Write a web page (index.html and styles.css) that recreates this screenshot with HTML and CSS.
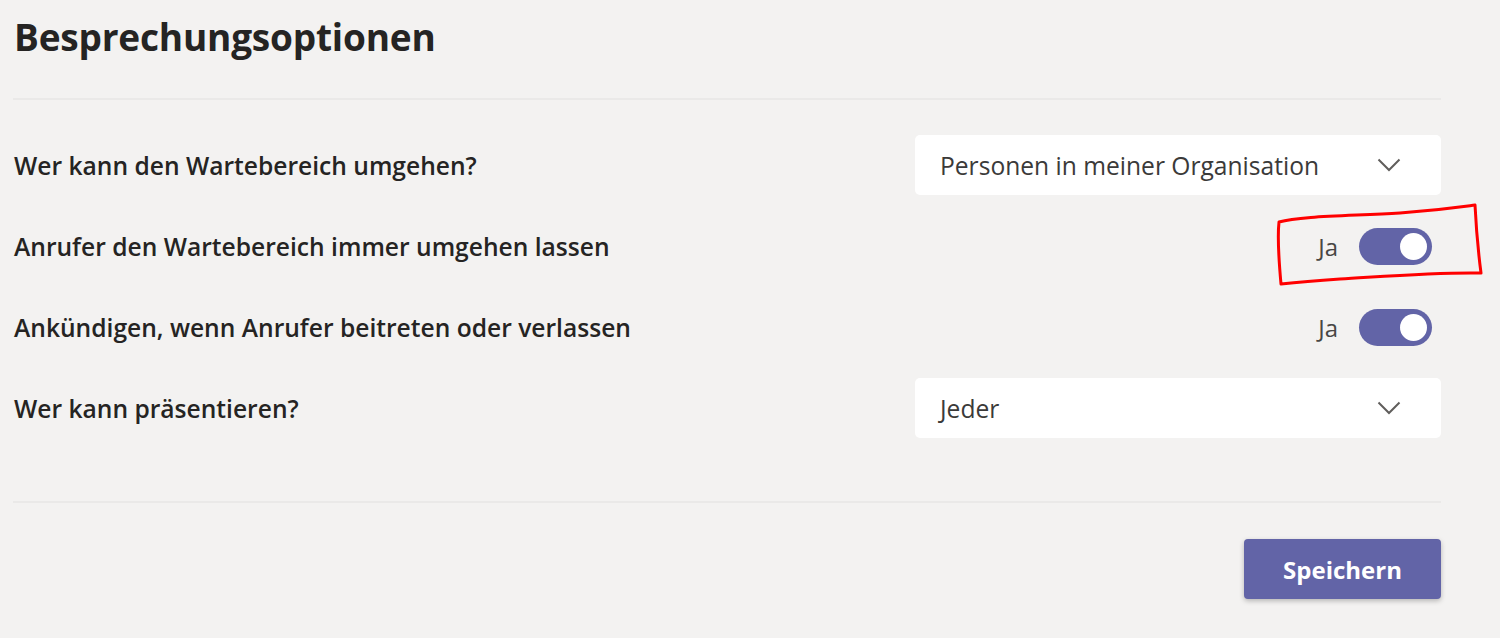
FILE: index.html
```html
<!DOCTYPE html>
<html lang="de">
<head>
<meta charset="utf-8">
<title>Besprechungsoptionen</title>
<link rel="stylesheet" href="styles.css">
</head>
<body>
<main class="page">
  <h1 class="title">Besprechungsoptionen</h1>
  <hr class="divider">
  <section class="options">
    <div class="row">
      <span class="label">Wer kann den Wartebereich umgehen?</span>
      <div class="select">
        <span class="select-text">Personen in meiner Organisation</span>
        <svg class="chevron" width="24" height="14" viewBox="0 0 24 14"><path d="M1.5 1.5 L12 12 L22.5 1.5" fill="none" stroke="#605e5c" stroke-width="2"/></svg>
      </div>
    </div>
    <div class="row">
      <span class="label">Anrufer den Wartebereich immer umgehen lassen</span>
      <div class="switch-wrap">
        <span class="switch-text">Ja</span>
        <span class="switch"><span class="knob"></span></span>
      </div>
    </div>
    <div class="row">
      <span class="label">Ankündigen, wenn Anrufer beitreten oder verlassen</span>
      <div class="switch-wrap">
        <span class="switch-text">Ja</span>
        <span class="switch"><span class="knob"></span></span>
      </div>
    </div>
    <div class="row">
      <span class="label">Wer kann präsentieren?</span>
      <div class="select">
        <span class="select-text">Jeder</span>
        <svg class="chevron" width="24" height="14" viewBox="0 0 24 14"><path d="M1.5 1.5 L12 12 L22.5 1.5" fill="none" stroke="#605e5c" stroke-width="2"/></svg>
      </div>
    </div>
  </section>
  <hr class="divider divider-bottom">
  <div class="actions">
    <button class="save">Speichern</button>
  </div>
</main>
<svg class="annotation" width="1500" height="638" viewBox="0 0 1500 638">
  <path d="M1279 222 C1300 216 1350 216 1400 213 C1440 210 1460 207 1475 205 C1476 225 1478 250 1481 273 C1440 272 1390 276 1340 279 C1310 281 1290 283 1281 284 C1279 262 1277 240 1279 222 Z" fill="none" stroke="#f00" stroke-width="3" stroke-linejoin="round"/>
</svg>
</body>
</html>
```
FILE: styles.css
```css
html, body {
  margin: 0;
  padding: 0;
}
body {
  background: #f3f2f1;
  font-family: "Open Sans", "Noto Sans", "Liberation Sans", sans-serif;
  color: #252423;
  width: 1500px;
  height: 638px;
  overflow: hidden;
  position: relative;
}
.page {
  width: 1428px;
  margin-left: 13px;
  padding-top: 13px;
}
.title {
  margin: 0;
  font-size: 37px;
  font-weight: 700;
  line-height: 48px;
  letter-spacing: -0.2px;
  padding-left: 1px;
}
.divider {
  border: none;
  height: 2px;
  background: #eae9e8;
  margin: 37px 0 0 0;
}
.options {
  display: flex;
  flex-direction: column;
  gap: 21px;
  margin-top: 35px;
}
.row {
  display: flex;
  align-items: center;
  justify-content: space-between;
  height: 60px;
}
.label {
  font-size: 24.6px;
  font-weight: 600;
  color: #252423;
  padding-left: 1px;
}
.select {
  width: 526px;
  height: 60px;
  box-sizing: border-box;
  background: #fff;
  border-radius: 5px;
  display: flex;
  align-items: center;
  justify-content: space-between;
  padding: 0 40px 0 25px;
}
.select-text {
  font-size: 24.6px;
  color: #3b3a39;
}
.chevron {
  display: block;
}
.switch-wrap {
  display: flex;
  align-items: center;
  gap: 21px;
  padding-right: 9px;
}
.switch-text {
  font-size: 24px;
  color: #484644;
}
.switch {
  width: 73px;
  height: 37px;
  border-radius: 19px;
  background: #6264a7;
  display: flex;
  align-items: center;
  justify-content: flex-end;
  padding-right: 5px;
  box-sizing: border-box;
}
.knob {
  width: 27px;
  height: 27px;
  border-radius: 50%;
  background: #fff;
}
.divider-bottom {
  margin-top: 63px;
}
.actions {
  display: flex;
  justify-content: flex-end;
  margin-top: 36px;
}
.save {
  width: 197px;
  height: 60px;
  border: none;
  border-radius: 4px;
  background: #6264a7;
  color: #fff;
  font-family: inherit;
  font-size: 24px;
  font-weight: 700;
  box-shadow: 0 2px 5px rgba(0,0,0,0.25);
  padding: 0;
}
.annotation {
  position: absolute;
  left: 0;
  top: 0;
  pointer-events: none;
}
```
